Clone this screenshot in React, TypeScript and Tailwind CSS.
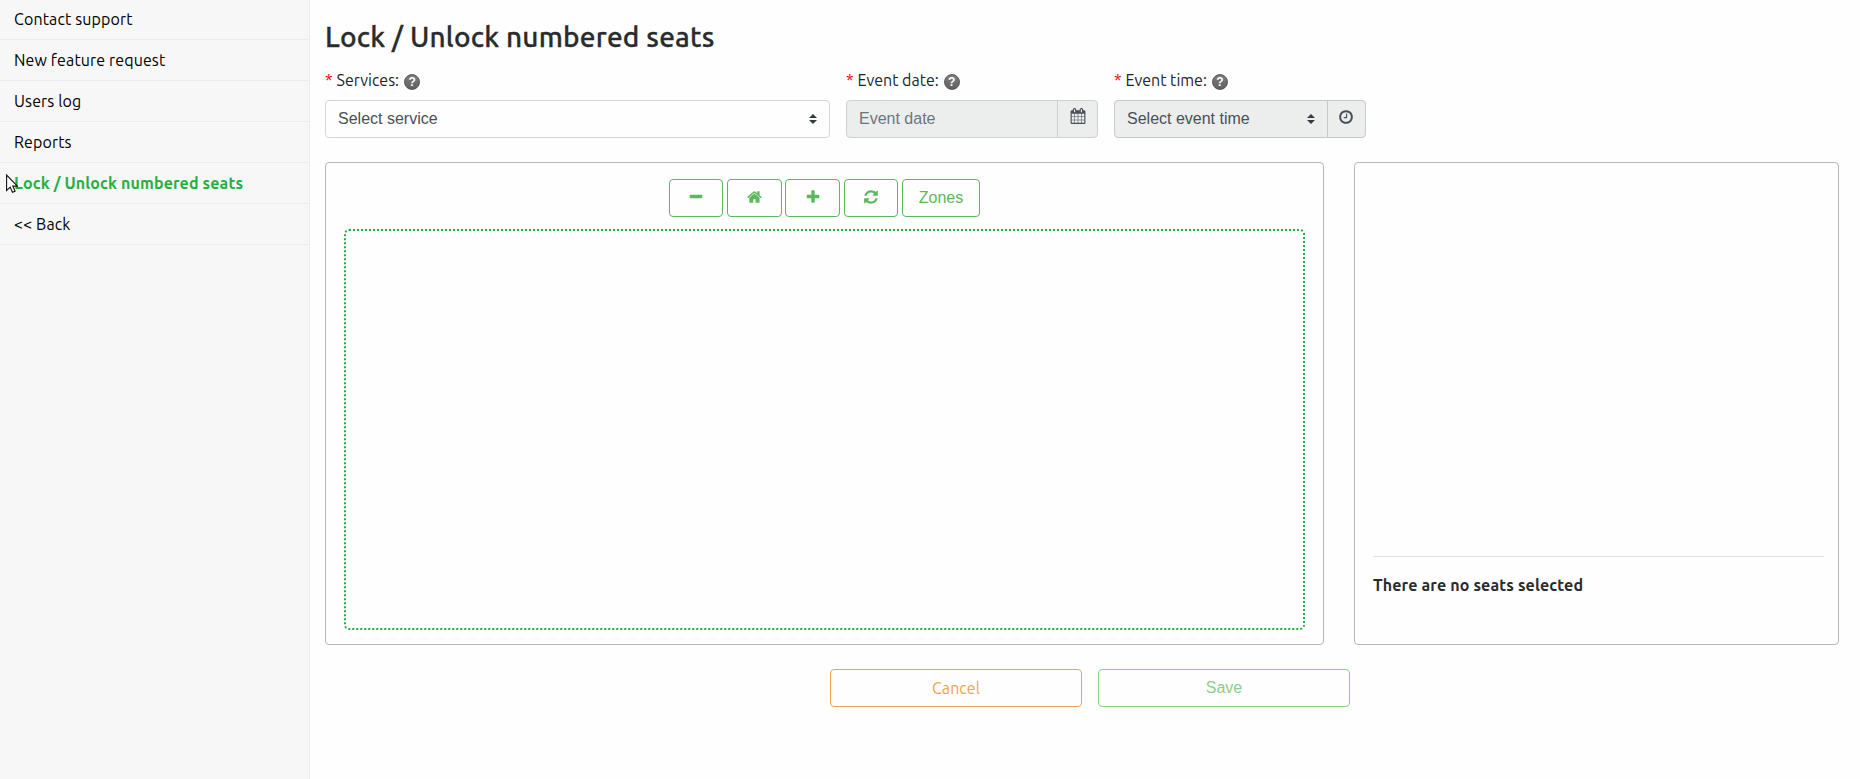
import type { ReactNode } from "react";

const ICONS = {
  minus: "M1600 736v192q0 40-28 68t-68 28h-1216q-40 0-68-28t-28-68v-192q0-40 28-68t68-28h1216q40 0 68 28t28 68z",
  plus: "M1600 736v192q0 40-28 68t-68 28h-416v416q0 40-28 68t-68 28h-192q-40 0-68-28t-28-68v-416h-416q-40 0-68-28t-28-68v-192q0-40 28-68t68-28h416v-416q0-40 28-68t68-28h192q40 0 68 28t28 68v416h416q40 0 68 28t28 68z",
  home: "M1408 992v480q0 26-19 45t-45 19h-384v-384h-256v384h-384q-26 0-45-19t-19-45v-480q0-1 .5-3t.5-3l575-474 575 474q1 2 1 6zm223-69l-62 74q-8 9-21 11h-3q-13 0-21-7l-692-577-692 577q-12 8-24 7-13-2-21-11l-62-74q-8-10-7-23.5t11-21.5l719-599q32-26 76-26t76 26l244 204v-195q0-14 9-23t23-9h192q14 0 23 9t9 23v408l219 182q10 8 11 21.5t-7 23.5z",
  refresh:
    "M1639 1056q0 5-1 7-64 268-268 434.5t-478 166.5q-146 0-282.5-55t-243.5-157l-129 129q-19 19-45 19t-45-19-19-45v-448q0-26 19-45t45-19h448q26 0 45 19t19 45-19 45l-137 137q71 66 161 102t187 36q134 0 250-65t186-179q11-17 53-117 8-23 30-23h192q13 0 22.5 9.5t9.5 22.5zm25-800v448q0 26-19 45t-45 19h-448q-26 0-45-19t-19-45 19-45l138-138q-148-137-349-137-134 0-250 65t-186 179q-11 17-53 117-8 23-30 23h-199q-13 0-22.5-9.5t-9.5-22.5v-7q65-268 270-434.5t480-166.5q146 0 284 55.5t245 156.5l130-129q19-19 45-19t45 19 19 45z",
  calendar:
    "M192 1664h288v-288h-288v288zm352 0h320v-288h-320v288zm-352-352h288v-320h-288v320zm352 0h320v-320h-320v320zm-352-384h288v-288h-288v288zm736 736h320v-288h-320v288zm-384-736h320v-288h-320v288zm768 736h288v-288h-288v288zm-384-352h320v-320h-320v320zm-352-864v-288q0-13-9.5-22.5t-22.5-9.5h-64q-13 0-22.5 9.5t-9.5 22.5v288q0 13 9.5 22.5t22.5 9.5h64q13 0 22.5-9.5t9.5-22.5zm736 864h288v-320h-288v320zm-384-384h320v-288h-320v288zm384 0h288v-288h-288v288zm32-480v-288q0-13-9.5-22.5t-22.5-9.5h-64q-13 0-22.5 9.5t-9.5 22.5v288q0 13 9.5 22.5t22.5 9.5h64q13 0 22.5-9.5t9.5-22.5zm384-64v1280q0 52-38 90t-90 38h-1408q-52 0-90-38t-38-90v-1280q0-52 38-90t90-38h128v-96q0-66 47-113t113-47h64q66 0 113 47t47 113v96h384v-96q0-66 47-113t113-47h64q66 0 113 47t47 113v96h128q52 0 90 38t38 90z",
  clock:
    "M1024 544v448q0 14-9 23t-23 9h-320q-14 0-23-9t-9-23v-64q0-14 9-23t23-9h224v-352q0-14 9-23t23-9h64q14 0 23 9t9 23zm416 352q0-148-73-273t-198-198-273-73-273 73-198 198-73 273 73 273 198 198 273 73 273-73 198-198 73-273zm224 0q0 209-103 385.5t-279.5 279.5-385.5 103-385.5-103-279.5-279.5-103-385.5 103-385.5 279.5-279.5 385.5-103 385.5 103 279.5 279.5 103 385.5z",
};

const menu = [
  { label: "Contact support" },
  { label: "New feature request" },
  { label: "Users log" },
  { label: "Reports" },
  { label: "Lock / Unlock numbered seats", active: true },
  { label: "<< Back" },
];

function Icon({ name }: { name: keyof typeof ICONS }) {
  return (
    <svg viewBox="0 0 1792 1792" className="mb-0.5 size-4" fill="currentColor" aria-hidden="true">
      <path d={ICONS[name]} />
    </svg>
  );
}

function Carets() {
  return (
    <svg viewBox="0 0 4 5" className="h-[10px] w-2 shrink-0" fill="#343a40" aria-hidden="true">
      <path d="M2 0L0 2h4zm0 5L0 3h4z" />
    </svg>
  );
}

function FieldLabel({ children }: { children: ReactNode }) {
  return (
    <label className="flex h-6 items-center text-base text-[#212529]">
      <span className="mr-1 text-[#f00000]">*</span>
      {children}
      <span className="mt-[3px] ml-[5px] flex size-4 items-center justify-center rounded-full border border-[#595959] bg-linear-to-b from-[#7e7e7e] to-[#606060] font-['Liberation_Sans'] text-[12px] leading-none font-bold text-white">
        ?
      </span>
    </label>
  );
}

function ToolButton({ width, children }: { width: string; children: ReactNode }) {
  return (
    <button
      type="button"
      className={`flex h-[38px] items-center justify-center rounded border border-[#5cb85c] font-['Liberation_Sans'] text-base text-[#5cb85c] ${width}`}
    >
      {children}
    </button>
  );
}

export default function App() {
  return (
    <div className="relative flex h-[779px] w-[1860px] overflow-hidden bg-[#fefefe] font-['Ubuntu','Noto_Sans',sans-serif] text-base text-[#292b2c]">
      <aside className="w-[310px] shrink-0 border-r border-[#ebeceb] bg-[#f7f7f7]">
        <nav className="-mt-px">
          {menu.map((item) => (
            <a
              key={item.label}
              className={`flex h-[41px] items-center border-b border-[#eaebea] pl-3.5 tracking-[0.13px] ${
                item.active ? "font-bold text-[#1fb141]" : "text-black"
              }`}
            >
              {item.label}
            </a>
          ))}
        </nav>
      </aside>

      <main className="flex-1 pt-5 pr-[21px] pl-[15px]">
        <h1 className="h-[34px] text-[28px] leading-[34px] font-medium tracking-[0.21px] [-webkit-text-stroke:0.3px]">
          Lock / Unlock numbered seats
        </h1>

        <div className="mt-3.5 flex gap-4">
          <div className="w-[505px]">
            <FieldLabel>Services:</FieldLabel>
            <div className="mt-2 flex h-[38px] items-center justify-between rounded border border-[#d3d6d9] pr-3 pl-3 font-['Liberation_Sans'] text-[#495057]">
              Select service
              <Carets />
            </div>
          </div>
          <div className="w-[252px]">
            <FieldLabel>Event date:</FieldLabel>
            <div className="mt-2 flex h-[38px] rounded border border-[#cdd1d4] bg-[#eceeee] font-['Liberation_Sans'] text-[#6c757d]">
              <span className="flex flex-1 items-center pl-3">Event date</span>
              <span className="flex w-10 items-center justify-center border-l border-[#cdd1d4] pb-1 text-[#495057]">
                <Icon name="calendar" />
              </span>
            </div>
          </div>
          <div className="w-[252px]">
            <FieldLabel>Event time:</FieldLabel>
            <div className="mt-2 flex h-[38px] rounded border border-[#c5c9cc] bg-[#eceeee] font-['Liberation_Sans'] text-[#495057]">
              <span className="flex flex-1 items-center justify-between pr-3 pl-3">
                Select event time
                <Carets />
              </span>
              <span className="flex w-[38px] items-center justify-center border-l border-[#c5c9cc] pr-px pb-0.5">
                <Icon name="clock" />
              </span>
            </div>
          </div>
        </div>

        <div className="mt-6 flex h-[483px] justify-between">
          <section className="w-[999px] rounded border border-[#b5b6b5] px-[18px] pt-4">
            <div className="flex h-[38px] justify-center">
              <ToolButton width="w-[54px] mr-1"><Icon name="minus" /></ToolButton>
              <ToolButton width="w-[55px] mr-[3px]"><Icon name="home" /></ToolButton>
              <ToolButton width="w-[55px] mr-1"><Icon name="plus" /></ToolButton>
              <ToolButton width="w-[54px] mr-1"><Icon name="refresh" /></ToolButton>
              <ToolButton width="w-[78px]">Zones</ToolButton>
            </div>
            <div className="mt-3 h-[401px] rounded-[5px] border-2 border-dotted border-[#1fb141]" />
          </section>
          <section className="flex w-[485px] flex-col rounded border border-[#b5b6b5] pr-3.5 pb-[47px] pl-[18px]">
            <div className="mt-auto border-t border-[#dedfde] pt-4 leading-6 font-bold tracking-[0.14px]">
              There are no seats selected
            </div>
          </section>
        </div>

        <div className="mt-6 ml-[505px] flex gap-4">
          <button type="button" className="h-[38px] w-[252px] rounded border border-[#f0a24e] tracking-[0.1px] text-[#f0a24e]">
            Cancel
          </button>
          <button
            type="button"
            disabled
            className="h-[38px] w-[252px] rounded border border-[#8ccd8c] font-['Liberation_Sans'] text-[#8ccd8c]"
          >
            Save
          </button>
        </div>
      </main>

      {/* mouse pointer */}
      <svg viewBox="0 0 12 19" className="absolute top-[174px] left-[6px] h-[19px] w-3" aria-hidden="true">
        <path d="M.6 1v15.5l3.6-3.4 2.3 5.2 2.6-1.1-2.3-5.1h4.6z" fill="#fff" stroke="#111" strokeWidth="1.1" />
      </svg>
    </div>
  );
}
